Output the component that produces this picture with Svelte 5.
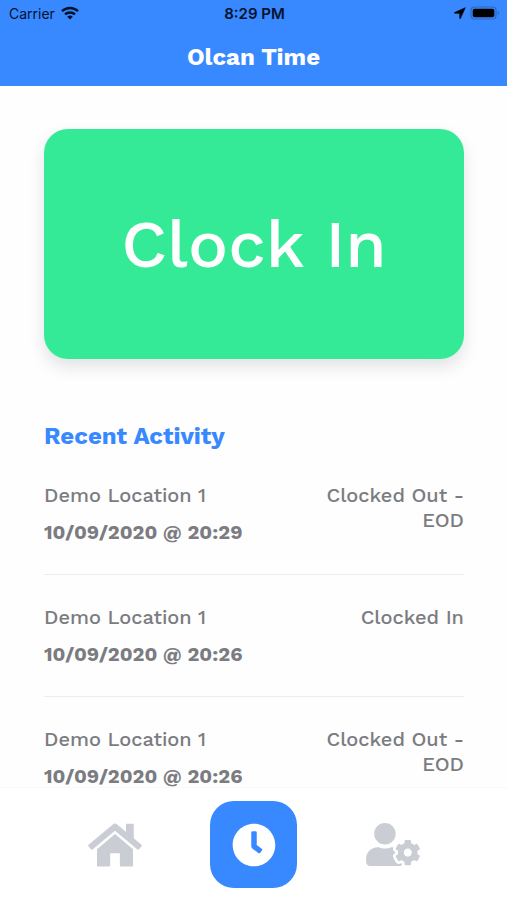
<script>
  const activity = [
    { place: 'Demo Location 1', time: '10/09/2020 @ 20:29', status: 'Clocked Out - EOD' },
    { place: 'Demo Location 1', time: '10/09/2020 @ 20:26', status: 'Clocked In' },
    { place: 'Demo Location 1', time: '10/09/2020 @ 20:26', status: 'Clocked Out - EOD' }
  ];
</script>

<div class="app">
  <header>
    <div class="status-bar">
      <div class="carrier">
        <span>Carrier</span>
        <svg width="18" height="14" viewBox="0 0 18 14" aria-hidden="true">
          <g fill="none" stroke="#06122b" stroke-width="2.5">
            <path d="M1 5.2a11.6 11.6 0 0 1 16 0" />
            <path d="M4 8.4a7.3 7.3 0 0 1 10 0" />
          </g>
          <path d="M6.2 10.7a4.1 4.1 0 0 1 5.6 0L9 13.6z" fill="#06122b" />
        </svg>
      </div>
      <span class="time">8:29 PM</span>
      <div class="indicators">
        <svg width="12" height="12" viewBox="0 0 12 12" aria-hidden="true">
          <path d="M11.3.7.6 5.6c-.4.2-.3.7.2.7h4.9v4.9c0 .5.5.6.7.2z" fill="#000" stroke="#000" stroke-width=".6" />
        </svg>
        <svg width="30" height="14" viewBox="0 0 30 14" aria-hidden="true">
          <rect x="1" y="1" width="25" height="12" rx="3.5" fill="none" stroke="#2a68c4" stroke-width="1.2" />
          <rect x="2.7" y="2.7" width="21.6" height="8.6" rx="2" fill="#000" />
          <path d="M27.7 5v4c1.8-.7 1.8-3.3 0-4z" fill="#2a68c4" />
        </svg>
      </div>
    </div>
    <h1>Olcan Time</h1>
  </header>

  <main>
    <button class="clock-in" type="button">Clock In</button>

    <section>
      <h2>Recent Activity</h2>
      <ul>
        {#each activity as item}
          <li>
            <div class="entry">
              <span>{item.place}</span>
              <strong>{item.time}</strong>
            </div>
            <span class="state">{item.status}</span>
          </li>
        {/each}
      </ul>
    </section>
  </main>

  <nav aria-label="Main">
    <button type="button" aria-label="Home">
      <svg width="54" height="48" viewBox="0 0 576 512" fill="currentColor" aria-hidden="true">
        <path d="M288 138 96 300v178c0 4 2 6 6 6h128c4 0 6-2 6-6V350c0-4 2-6 6-6h92c4 0 6 2 6 6v128c0 4 2 6 6 6h128c4 0 6-2 6-6V300zM570 252l-82-68V34c0-4-2-6-6-6h-70c-4 0-6 2-6 6v82L311 36c-14-11-32-11-46 0L6 252c-5 4-6 11-2 16l28 34c4 5 11 6 16 2L288 105l240 199c5 4 12 3 16-2l28-34c4-5 3-12-2-16z" />
      </svg>
    </button>
    <button type="button" class="active" aria-label="Clock" aria-current="page">
      <svg width="44" height="44" viewBox="0 0 512 512" fill="currentColor" aria-hidden="true">
        <path d="M256,8C119,8,8,119,8,256S119,504,256,504,504,393,504,256,393,8,256,8Zm92.49,313h0l-20,25a16,16,0,0,1-22.49,2.5h0l-67-49.72a40,40,0,0,1-15-31.23V112a16,16,0,0,1,16-16h32a16,16,0,0,1,16,16V256l58,42.5A16,16,0,0,1,348.49,321Z" />
      </svg>
    </button>
    <button type="button" aria-label="Account settings">
      <svg width="54" height="43" viewBox="0 0 640 512" fill="currentColor" aria-hidden="true">
        <path d="M610.5 373.3c2.6-14.1 2.6-28.5 0-42.6l25.8-14.9c3-1.7 4.3-5.2 3.3-8.5-6.7-21.6-18.2-41.2-33.2-57.4-2.3-2.5-6-3.1-9-1.4l-25.8 14.9c-10.9-9.3-23.4-16.5-36.9-21.3v-29.8c0-3.4-2.4-6.4-5.7-7.1-22.3-5-45-4.8-66.2 0-3.3.7-5.7 3.7-5.7 7.1v29.8c-13.5 4.8-26 12-36.9 21.3l-25.8-14.9c-2.9-1.7-6.7-1.1-9 1.4-15 16.2-26.5 35.8-33.2 57.4-1 3.3.4 6.8 3.3 8.5l25.8 14.9c-2.6 14.1-2.6 28.5 0 42.6l-25.8 14.9c-3 1.7-4.3 5.2-3.3 8.5 6.7 21.6 18.2 41.1 33.2 57.4 2.3 2.5 6 3.1 9 1.4l25.8-14.9c10.9 9.3 23.4 16.5 36.9 21.3v29.8c0 3.4 2.4 6.4 5.7 7.1 22.3 5 45 4.8 66.2 0 3.3-.7 5.7-3.7 5.7-7.1v-29.8c13.5-4.8 26-12 36.9-21.3l25.8 14.9c2.9 1.7 6.7 1.1 9-1.4 15-16.2 26.5-35.8 33.2-57.4 1-3.3-.4-6.8-3.3-8.5l-25.8-14.9zM496 400.5c-26.8 0-48.5-21.8-48.5-48.5s21.8-48.5 48.5-48.5 48.5 21.8 48.5 48.5-21.7 48.5-48.5 48.5zM224 256c70.7 0 128-57.3 128-128S294.7 0 224 0 96 57.3 96 128s57.3 128 128 128zm201.2 226.5c-2.3-1.2-4.6-2.6-6.8-3.9l-7.9 4.6c-6 3.4-12.8 5.3-19.6 5.3-10.9 0-21.4-4.6-28.9-12.6-18.3-19.8-32.3-43.9-40.2-69.6-5.5-17.7 1.9-36.4 17.9-45.7l7.9-4.6c-.1-2.6-.1-5.2 0-7.8l-7.9-4.6c-16-9.2-23.4-28-17.9-45.7.9-2.9 2.2-5.8 3.2-8.7-3.8-.3-7.5-1.2-11.4-1.2h-16.7c-22.2 10.2-46.9 16-72.9 16s-50.6-5.8-72.9-16h-16.7C60.2 288 0 348.2 0 422.4V464c0 26.5 21.5 48 48 48h352c10.1 0 19.5-3.2 27.2-8.5-1.2-3.8-2-7.7-2-11.8v-9.2z" />
      </svg>
    </button>
  </nav>
</div>

<style>
  :global(body) {
    margin: 0;
    background: #fefefe;
  }

  .app {
    display: flex;
    flex-direction: column;
    height: 100vh;
    font-family: 'Work Sans', Inter, 'Liberation Sans', sans-serif;
    color: #7b7c81;
  }

  button {
    border: 0;
    padding: 0;
    background: none;
    font: inherit;
    color: inherit;
    cursor: pointer;
  }

  svg {
    display: block;
  }

  header {
    flex: none;
    background: #3888ff;
  }

  .status-bar {
    display: grid;
    grid-template-columns: 1fr auto 1fr;
    align-items: center;
    height: 26px;
    padding: 0 7px 0 9px;
    font-family: Inter, sans-serif;
    font-size: 14px;
    color: #06122b;
  }

  .carrier,
  .indicators {
    display: flex;
    align-items: center;
    gap: 6px;
  }

  .indicators {
    justify-content: flex-end;
    gap: 4px;
  }

  .time {
    font-size: 15px;
    font-weight: 600;
  }

  h1 {
    margin: 0;
    padding: 15px 0 13px;
    font-size: 24px;
    font-weight: 700;
    line-height: 32px;
    text-align: center;
    color: #fff;
  }

  main {
    flex: 1;
    min-height: 0;
    padding: 43px 43px 0 44px;
    overflow-y: auto;
    scrollbar-width: none;
  }

  .clock-in {
    display: block;
    width: 100%;
    height: 230px;
    border-radius: 24px;
    background: #35ea97;
    box-shadow: 0 8px 16px rgba(40, 50, 70, 0.13);
    font-size: 67px;
    font-weight: 500;
    color: #fff;
  }

  h2 {
    margin: 61px 0 1px;
    font-size: 24px;
    font-weight: 700;
    line-height: 32px;
    color: #3888ff;
  }

  ul {
    margin: 0;
    padding: 0;
    list-style: none;
  }

  li {
    display: flex;
    justify-content: space-between;
    padding: 30px 0 29px;
    border-bottom: 1px solid #ededef;
    font-size: 20px;
    font-weight: 500;
    line-height: 25px;
  }

  .entry {
    display: flex;
    flex-direction: column;
    gap: 12px;
  }

  strong {
    font-weight: 700;
  }

  .state {
    width: 140px;
    text-align: right;
  }

  nav {
    flex: none;
    display: grid;
    grid-template-columns: repeat(3, 1fr);
    align-items: center;
    justify-items: center;
    padding: 13px 45px 12px;
    border-top: 1px solid #f8f8f9;
    background: #fff;
    color: #cacdd4;
  }

  nav button {
    display: grid;
    place-items: center;
    width: 87px;
    height: 87px;
    border-radius: 24px;
  }

  nav .active {
    background: #3888ff;
    color: #fff;
  }
</style>
